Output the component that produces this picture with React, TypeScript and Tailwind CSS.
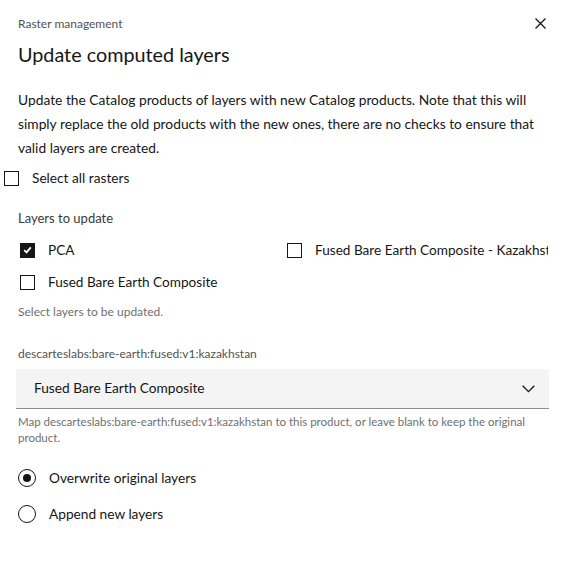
type Layer = { label: string; checked: boolean };

const layers: Layer[] = [
  { label: "PCA", checked: true },
  { label: "Fused Bare Earth Composite - Kazakhstan", checked: false },
  { label: "Fused Bare Earth Composite", checked: false },
];

function Checkbox({ checked }: { checked: boolean }) {
  return checked ? (
    <span className="flex h-[15px] w-[15px] shrink-0 items-center justify-center bg-[#161616]">
      <svg width="9" height="8" viewBox="0 0 9 8" fill="none">
        <path d="M1.2 4.2 L3.5 6.4 L7.8 1.4" stroke="#fff" strokeWidth="1.8" />
      </svg>
    </span>
  ) : (
    <span className="block h-[15px] w-[15px] shrink-0 border border-[#161616] bg-white" />
  );
}

function Radio({ checked, label }: { checked: boolean; label: string }) {
  return (
    <div className="flex h-6 items-center">
      <span className="flex h-[18px] w-[18px] shrink-0 items-center justify-center rounded-full border-[1.5px] border-[#161616]">
        {checked && <span className="block h-2 w-2 rounded-full bg-[#161616]" />}
      </span>
      <span className="ml-[13px] text-[13.7px] text-[#161616]">{label}</span>
    </div>
  );
}

export default function App() {
  return (
    <div
      className="relative min-h-[577px] w-full bg-white px-[18px] pb-10 text-[#161616]"
      style={{ fontFamily: "Lato, 'Noto Sans', sans-serif" }}
    >
      <button className="absolute right-[18px] top-[18px] flex h-[11px] w-[11px] items-center justify-center">
        <svg width="11" height="11" viewBox="0 0 11 11" fill="none">
          <path d="M0.5 0.5 L10.5 10.5 M10.5 0.5 L0.5 10.5" stroke="#161616" strokeWidth="1.3" />
        </svg>
      </button>

      <div className="pt-4 text-[12px] leading-4 text-[#525252]">Raster management</div>
      <h2 className="mt-2 text-[19.8px] leading-7 text-[#161616]">Update computed layers</h2>

      <p className="mt-5 w-[528px] text-[13.8px] leading-6 text-[#161616]">
        Update the Catalog products of layers with new Catalog products. Note that this will
        simply replace the old products with the new ones, there are no checks to ensure that
        valid layers are created.
      </p>

      <label className="-ml-[14px] mt-[6px] flex h-6 items-center">
        <Checkbox checked={false} />
        <span className="ml-[13px] text-[13.7px]">Select all rasters</span>
      </label>

      <div className="mt-5 text-[13px] leading-4 text-[#393939]">Layers to update</div>

      <div className="ml-[2px] mt-2 grid w-[528px] grid-cols-[267px_261px]">
        {layers.map((l) => (
          <label key={l.label} className="flex h-8 items-center overflow-hidden">
            <Checkbox checked={l.checked} />
            <span className="ml-[13px] whitespace-nowrap text-[13.6px]">{l.label}</span>
          </label>
        ))}
      </div>

      <div className="mt-[6px] text-[12px] leading-4 text-[#6f6f6f]">Select layers to be updated.</div>

      <div className="mt-[26px] text-[12px] leading-4 text-[#525252]">
        descarteslabs:bare-earth:fused:v1:kazakhstan
      </div>

      <div className="-ml-[2px] mt-[7px] flex h-10 w-[533px] items-center justify-between border-b border-[#8d8d8d] bg-[#f4f4f4] pl-[18px] pr-[14px]">
        <span className="text-[13.7px] text-[#161616]">Fused Bare Earth Composite</span>
        <svg width="13" height="8" viewBox="0 0 13 8" fill="none">
          <path d="M0.7 0.8 L6.5 6.6 L12.3 0.8" stroke="#161616" strokeWidth="1.3" />
        </svg>
      </div>

      <p className="mt-[5px] w-[536px] text-[11.5px] leading-4 text-[#6f6f6f]">
        Map descarteslabs:bare-earth:fused:v1:kazakhstan to this product, or leave blank to keep
        the original product.
      </p>

      <div className="mt-5 flex flex-col gap-3">
        <Radio checked label="Overwrite original layers" />
        <Radio checked={false} label="Append new layers" />
      </div>
    </div>
  );
}
